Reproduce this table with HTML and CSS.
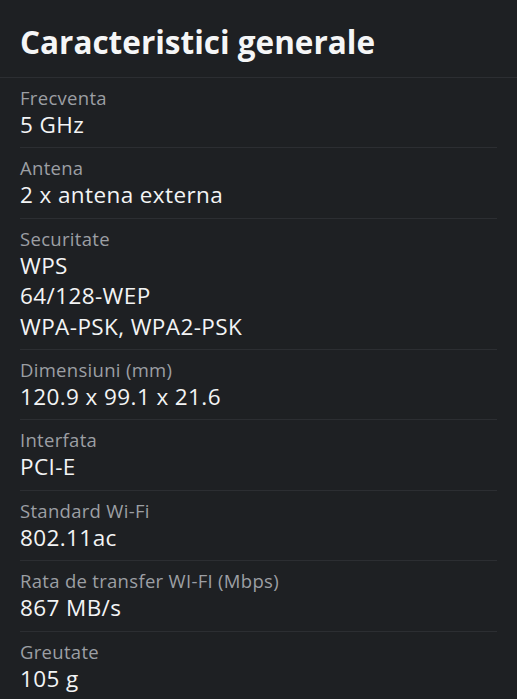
FILE: index.html
```html
<!DOCTYPE html>
<html lang="ro">
<head>
    <meta charset="UTF-8">
    <meta name="viewport" content="width=device-width, initial-scale=1.0">
    <title>Caracteristici generale</title>
    <link rel="stylesheet" href="styles.css">
</head>
<body>
    <div class="specs">
        <h1 class="specs-title">Caracteristici generale</h1>

        <ul class="spec-list">
            <li class="spec-row">
                <div class="spec-label">Frecventa</div>
                <div class="spec-value">5 GHz</div>
            </li>
            <li class="spec-row">
                <div class="spec-label">Antena</div>
                <div class="spec-value">2 x antena externa</div>
            </li>
            <li class="spec-row">
                <div class="spec-label">Securitate</div>
                <div class="spec-value">WPS</div>
                <div class="spec-value">64/128-WEP</div>
                <div class="spec-value">WPA-PSK, WPA2-PSK</div>
            </li>
            <li class="spec-row">
                <div class="spec-label">Dimensiuni (mm)</div>
                <div class="spec-value">120.9 x 99.1 x 21.6</div>
            </li>
            <li class="spec-row">
                <div class="spec-label">Interfata</div>
                <div class="spec-value">PCI-E</div>
            </li>
            <li class="spec-row">
                <div class="spec-label">Standard Wi-Fi</div>
                <div class="spec-value">802.11ac</div>
            </li>
            <li class="spec-row">
                <div class="spec-label">Rata de transfer WI-FI (Mbps)</div>
                <div class="spec-value">867 MB/s</div>
            </li>
            <li class="spec-row">
                <div class="spec-label">Greutate</div>
                <div class="spec-value">105 g</div>
            </li>
        </ul>
    </div>
</body>
</html>
```

FILE: styles.css
```css
html, body {
    margin: 0;
    padding: 0;
    background-color: #1e2023;
}
body {
    font-family: "Open Sans", "Noto Sans", sans-serif;
    color: #f3f4f5;
}
.specs {
    overflow: hidden;
}
.specs-title {
    margin: 0;
    padding: 20px 20px 0;
    height: 57px;
    font-size: 31.5px;
    font-weight: 700;
    line-height: 44px;
    color: #f5f6f7;
    border-bottom: 1px solid #2c2e32;
}
.spec-list {
    list-style: none;
    margin: 0 20px;
    padding: 0;
}
.spec-row {
    padding: 7px 0 7px;
    border-bottom: 1px solid #2c2e32;
}
.spec-label {
    font-size: 18.5px;
    line-height: 25px;
    letter-spacing: 0.3px;
    color: #9c9fa4;
}
.spec-value {
    font-size: 22.5px;
    line-height: 30.4px;
    letter-spacing: 0.4px;
    color: #f3f4f5;
}
```
